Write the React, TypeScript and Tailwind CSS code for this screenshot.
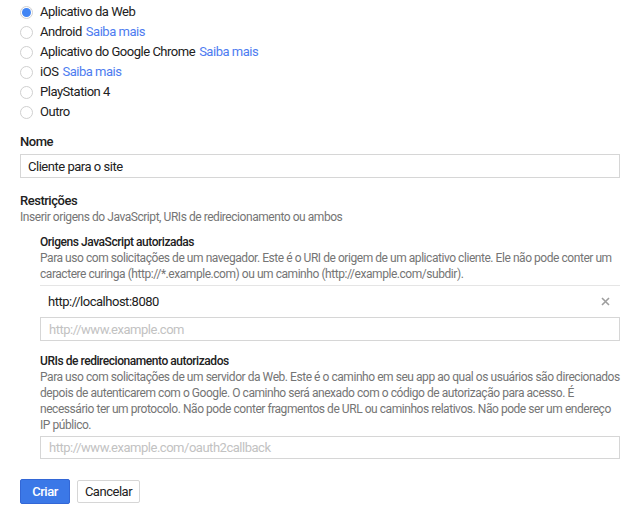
import React, { useState } from 'react';

const options = [
  { label: 'Aplicativo da Web', link: false },
  { label: 'Android', link: true },
  { label: 'Aplicativo do Google Chrome', link: true },
  { label: 'iOS', link: true },
  { label: 'PlayStation 4', link: false },
  { label: 'Outro', link: false },
];

const App: React.FC = () => {
  const [selected, setSelected] = useState(0);
  const [name, setName] = useState('Cliente para o site');

  return (
    <div className="font-['Roboto',sans-serif] text-[13px] tracking-[-0.48px] text-[#212121] bg-white min-h-screen px-5 pt-[2px] pb-4 w-[642px]">
      <div>
        {options.map((o, i) => (
          <label key={o.label} className="flex items-center h-5 cursor-pointer" onClick={() => setSelected(i)}>
            <span className="w-[13px] h-[13px] rounded-full border border-[#d0d0d0] flex items-center justify-center mr-[7px] bg-white">
              {selected === i && <span className="w-[9px] h-[9px] rounded-full bg-[#4285f4]" />}
            </span>
            <span>{o.label}</span>
            {o.link && <span className="ml-1 text-[#4d7cf0]">Saiba mais</span>}
          </label>
        ))}
      </div>

      <div className="mt-3 leading-4 font-medium">Nome</div>
      <input
        value={name}
        onChange={(e) => setName(e.target.value)}
        className="mt-1 w-[600px] h-6 border border-[#d6d6d6] px-[7px] text-[13px] tracking-[-0.48px] outline-none"
      />

      <div className="mt-[15px] leading-4 font-medium">Restrições</div>
      <div className="text-[12px] tracking-[-0.45px] leading-4 text-[#757575]">Inserir origens do JavaScript, URIs de redirecionamento ou ambos</div>

      <div className="ml-5 w-[580px] text-[12px] tracking-[-0.45px]">
        <div className="mt-[9px] leading-4 font-medium">Origens JavaScript autorizadas</div>
        <div className="leading-4 text-[#757575]">
          Para uso com solicitações de um navegador. Este é o URI de origem de um aplicativo cliente. Ele não pode conter um caractere curinga (http://*.example.com) ou um caminho (http://example.com/subdir).
        </div>
        <div className="mt-[3px] border-t border-[#e5e5e5] h-8 flex items-center justify-between pl-2 pr-[10px] text-[13px] tracking-[-0.48px]">
          <span>http://localhost:8080</span>
          <svg width="9" height="9" viewBox="0 0 9 9" className="text-[#9e9e9e]">
            <path d="M1 1L8 8M8 1L1 8" stroke="currentColor" strokeWidth="1.6" />
          </svg>
        </div>
        <input
          placeholder="http://www.example.com"
          className="w-full h-6 border border-[#d6d6d6] px-2 text-[13px] tracking-[-0.48px] outline-none placeholder:text-[#c2c2c2]"
        />

        <div className="mt-3 leading-4 font-medium">URIs de redirecionamento autorizados</div>
        <div className="leading-4 text-[#757575]">
          Para uso com solicitações de um servidor da Web. Este é o caminho em seu app ao qual os usuários são direcionados depois de autenticarem com o Google. O caminho será anexado com o código de autorização para acesso. É necessário ter um protocolo. Não pode conter fragmentos de URL ou caminhos relativos. Não pode ser um endereço IP público.
        </div>
        <input
          placeholder="http://www.example.com/oauth2callback"
          className="mt-[3px] w-full h-[23px] border border-[#d6d6d6] px-2 text-[13px] tracking-[-0.48px] outline-none placeholder:text-[#c2c2c2]"
        />
      </div>

      <div className="mt-5 flex gap-[7px]">
        <button className="w-[50px] h-[25px] rounded-[2px] bg-[#3b78e7] border border-[#3367d6] text-white font-medium text-[13px]">
          Criar
        </button>
        <button className="w-[63px] h-[23px] mt-[1px] rounded-[2px] bg-white border border-[#d6d6d6] text-[#212121] text-[13px]">
          Cancelar
        </button>
      </div>
    </div>
  );
};

export default App;
